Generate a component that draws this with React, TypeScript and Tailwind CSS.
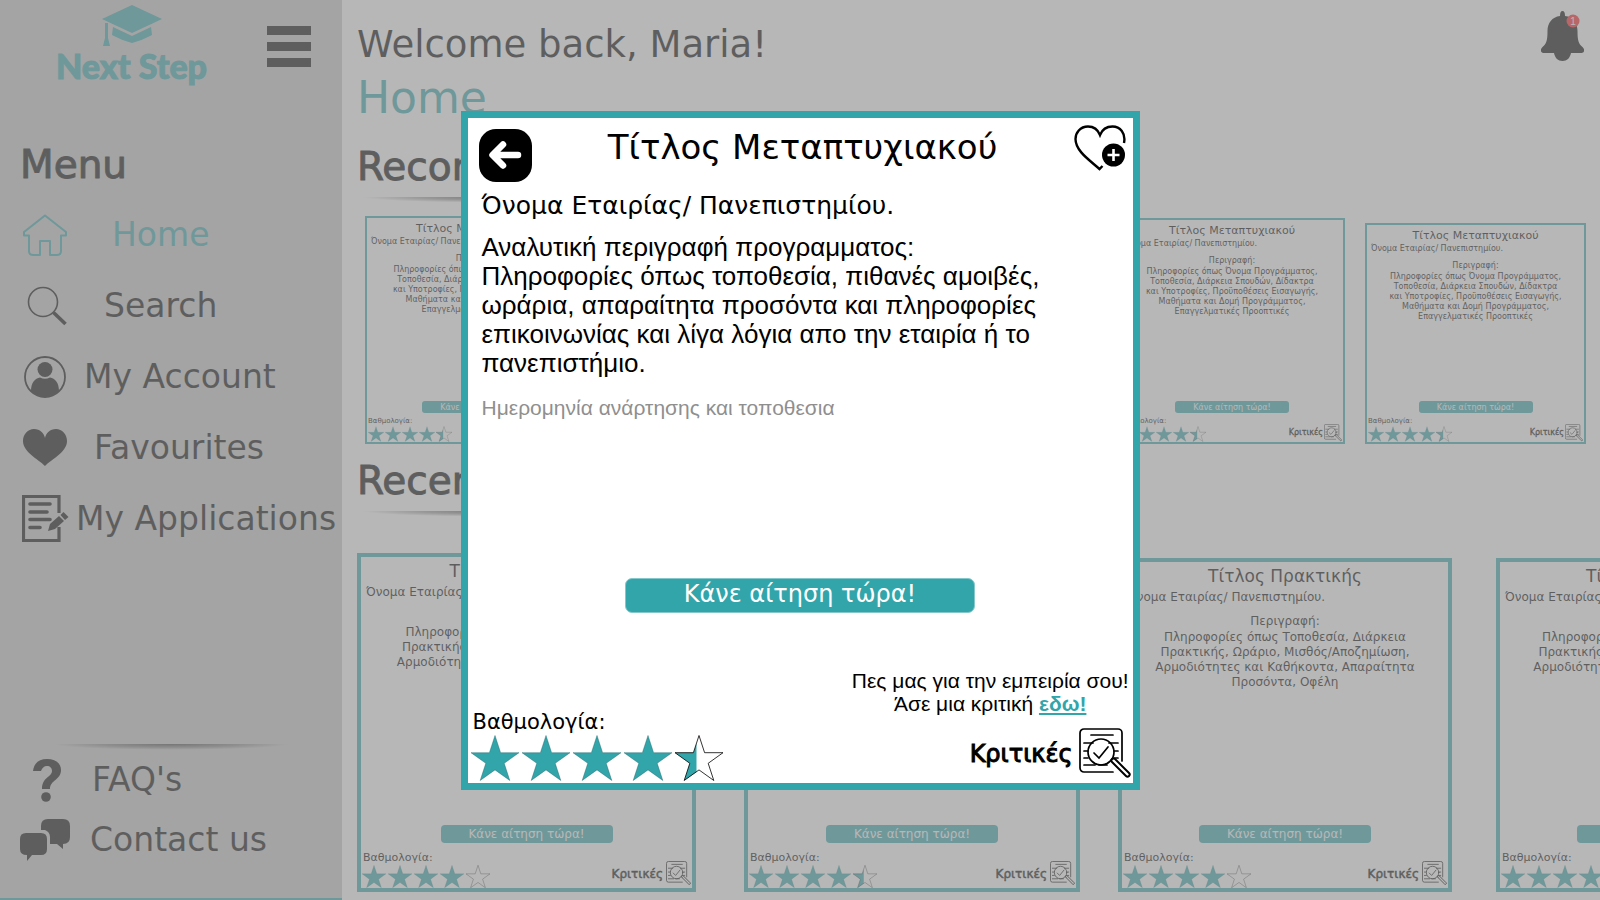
import React from "react";

type Rating = 4 | 4.5;
type Program = { title: string; description: string; rating: Rating; size: string };

const POSTGRADUATE =
  "Πληροφορίες όπως Όνομα Προγράμματος, Τοποθεσία, Διάρκεια Σπουδών, Δίδακτρα και Υποτροφίες, Προϋποθέσεις Εισαγωγής, Μαθήματα και Δομή Προγράμματος, Επαγγελματικές Προοπτικές";
const INTERNSHIP =
  "Πληροφορίες όπως Τοποθεσία, Διάρκεια Πρακτικής, Ωράριο, Μισθός/Αποζημίωση, Αρμοδιότητες και Καθήκοντα, Απαραίτητα Προσόντα, Οφέλη";

const recommended: Program[] = [
  { title: "Τίτλος Μεταπτυχιακού", description: POSTGRADUATE, rating: 4.5, size: "w-[228px]" },
  { title: "Τίτλος Μεταπτυχιακού", description: POSTGRADUATE, rating: 4.5, size: "w-[226px]" },
  { title: "Τίτλος Μεταπτυχιακού", description: POSTGRADUATE, rating: 4.5, size: "w-[226px]" },
  { title: "Τίτλος Μεταπτυχιακού", description: POSTGRADUATE, rating: 4.5, size: "w-[226px]" },
  { title: "Τίτλος Μεταπτυχιακού", description: POSTGRADUATE, rating: 4.5, size: "w-[221px]" },
];

const recent: Program[] = [
  { title: "Τίτλος Πρακτικής", description: INTERNSHIP, rating: 4, size: "w-[339px]" },
  { title: "Τίτλος Πρακτικής", description: INTERNSHIP, rating: 4.5, size: "w-[336px]" },
  { title: "Τίτλος Πρακτικής", description: INTERNSHIP, rating: 4, size: "w-[334px]" },
  { title: "Τίτλος Πρακτικής", description: INTERNSHIP, rating: 4, size: "w-[334px]" },
];

const STAR = "24,0 29.6,17.2 48,17.2 33.2,27.8 38.8,45 24,34.4 9.2,45 14.8,27.8 0,17.2 18.4,17.2";

function Star({ fill, className }: { fill: "full" | "half" | "none"; className: string }) {
  return (
    <svg viewBox="0 0 48 45" className={className} aria-hidden="true">
      {fill === "full" && <polygon points={STAR} fill="#32a5ab" stroke="#1d5f63" strokeWidth="0.4" />}
      {fill === "half" && (
        <polygon points="21.5,8 18.4,17.2 0,17.2 14.8,27.8 9.2,45 21.5,36.4" fill="#32a5ab" />
      )}
      {fill !== "full" && <polygon points={STAR} fill="none" stroke="#000" strokeWidth="0.8" />}
    </svg>
  );
}

function Stars({ rating, star, gap }: { rating: Rating; star: string; gap: string }) {
  return (
    <div className={`flex ${gap}`} role="img" aria-label={`${rating} / 5`}>
      {[0, 1, 2, 3].map((i) => (
        <Star key={i} fill="full" className={star} />
      ))}
      <Star fill={rating === 4.5 ? "half" : "none"} className={star} />
    </div>
  );
}

function ReviewIcon({ className }: { className: string }) {
  return (
    <svg viewBox="0 0 52 52" className={className} fill="none" stroke="currentColor" strokeWidth="1.7" strokeLinecap="round" aria-hidden="true">
      <path d="M34 44H5a4 4 0 0 1-4-4V5a4 4 0 0 1 4-4h34a4 4 0 0 1 4 4v28" />
      <path d="M12 7h22M5 15h9M30 15h9M5 23h4M35 23h4M5 30h4M35 30h4M5 37h11M20 37h8" />
      <circle cx="22" cy="24" r="13" />
      <path d="m15 25 5 5 9-11" />
      <path d="m33 34 14 14a1.8 1.8 0 0 0 3-3L36 31a2 2 0 0 0-3 3Z" strokeWidth="2" />
    </svg>
  );
}

function SmallCard({ program }: { program: Program }) {
  return (
    <article className={`${program.size} flex aspect-square flex-col border-2 border-[#32a5ab] bg-white`}>
      <h3 className="mt-1 text-center text-[11px] leading-[14px]">{program.title}</h3>
      <p className="ml-1 text-[8px] leading-[12px]">Όνομα Εταιρίας/ Πανεπιστημίου.</p>
      <p className="mt-[5px] text-center text-[8px] leading-[12px]">Περιγραφή:</p>
      <p className="mx-auto w-[177px] text-center text-[8px] leading-[10px]">{program.description}</p>
      <button type="button" className="mx-auto mt-auto h-3 w-[114px] rounded-[3px] bg-[#32a5ab] text-[8px] leading-[11px] text-white">
        Κάνε αίτηση τώρα!
      </button>
      <div className="mt-[3px] flex items-end justify-between px-px">
        <div>
          <p className="text-[7px] leading-[10px]">Βαθμολογία:</p>
          <Stars rating={program.rating} star="h-[16px] w-[16px]" gap="gap-px" />
        </div>
        <a href="#reviews" className="flex items-center gap-px text-[8px] leading-[12px] [-webkit-text-stroke:0.3px_#000]">
          Κριτικές
          <ReviewIcon className="size-[18px]" />
        </a>
      </div>
    </article>
  );
}

function LargeCard({ program }: { program: Program }) {
  return (
    <article className={`${program.size} flex aspect-square flex-col border-4 border-[#32a5ab] bg-white`}>
      <h3 className="mt-1 text-center text-[17px] leading-[20px]">{program.title}</h3>
      <p className="ml-[5px] mt-[3px] text-[12px] leading-[16px]">Όνομα Εταιρίας/ Πανεπιστημίου.</p>
      <p className="mt-2 text-center text-[12px] leading-[16px]">Περιγραφή:</p>
      <p className="mx-auto mt-px w-[280px] text-center text-[12px] leading-[15px]">{program.description}</p>
      <button type="button" className="mx-auto mt-auto h-[18px] w-[172px] rounded-[4px] bg-[#32a5ab] text-[12px] leading-[17px] text-white">
        Κάνε αίτηση τώρα!
      </button>
      <div className="mt-2 flex items-end justify-between px-px">
        <div>
          <p className="pl-px text-[11px] leading-[14px]">Βαθμολογία:</p>
          <Stars rating={program.rating} star="h-[23px] w-[24px]" gap="gap-[2px]" />
        </div>
        <a href="#reviews" className="mb-[2px] flex items-center gap-[3px] text-[12px] leading-[16px] [-webkit-text-stroke:0.5px_#000]">
          Κριτικές
          <ReviewIcon className="size-[25px]" />
        </a>
      </div>
    </article>
  );
}

function HomeIcon() {
  return (
    <svg viewBox="0 0 44 42" className="h-[42px] w-[44px]" fill="none" stroke="currentColor" strokeWidth="2" strokeLinejoin="round" aria-hidden="true">
      <path d="M22 1.5 43 18v3.5h-5V37q0 4-4 4h-7V27H17v14h-7q-4 0-4-4V21.500H1V18Z" />
    </svg>
  );
}
function SearchIcon() {
  return (
    <svg viewBox="0 0 40 40" className="ml-1 size-10" fill="none" stroke="currentColor" aria-hidden="true">
      <circle cx="16" cy="16" r="14.500" strokeWidth="1.600" />
      <path d="m26.500 26.500 12 11.500" strokeWidth="3.600" />
    </svg>
  );
}
function AccountIcon() {
  return (
    <svg viewBox="0 0 42 42" className="size-[42px]" fill="currentColor" aria-hidden="true">
      <circle cx="21" cy="21" r="20" fill="none" stroke="currentColor" strokeWidth="1.800" />
      <circle cx="21" cy="13.500" r="7.500" />
      <path d="M7 35c0-8 4-13 9-13.500q5 2.500 10 0c5 .5 9 5.500 9 13.500a20 20 0 0 1-28 0Z" />
    </svg>
  );
}
function HeartIcon() {
  return (
    <svg viewBox="0 0 44 37" className="h-[37px] w-[44px]" fill="currentColor" aria-hidden="true">
      <path d="M22 37C15 30 0 23 0 12 0 5 5 0 11 0c6 0 10 4 11 9 1-5 5-9 11-9s11 5 11 12c0 11-15 18-22 25Z" />
    </svg>
  );
}
function ApplicationsIcon() {
  return (
    <svg viewBox="0 0 47 47" className="h-[47px] w-[47px]" fill="none" stroke="currentColor" aria-hidden="true">
      <path d="M37 18V1.500H1.500v44H37V32" strokeWidth="3.200" />
      <path d="M8 9h20M8 17h17M8 24.500h20M8 32.500h10" strokeWidth="3.600" strokeLinecap="round" />
      <path d="m26 36 2-7 9-8 5 5-9 8Z" fill="currentColor" stroke="none" />
      <path d="m38.500 20 3-3 5 5-3.500 3Z" fill="currentColor" stroke="none" />
    </svg>
  );
}
function QuestionIcon() {
  return (
    <svg viewBox="0 0 28 43" className="ml-1 h-[43px] w-[28px]" fill="currentColor" aria-hidden="true">
      <path d="M0 12C1 4 6 0 14 0c8 0 14 4 14 11 0 10-11 10-11 19H9c0-12 10-12 10-18 0-3-2-5-5-5s-5 2-6 5Z" />
      <circle cx="13" cy="38" r="4.800" />
    </svg>
  );
}
function ChatIcon() {
  return (
    <svg viewBox="0 0 50 42" className="h-[42px] w-[50px]" fill="currentColor" aria-hidden="true">
      <path d="M21 11V7q0-7 7-7h15q7 0 7 7v11q0 7-7 7v5l-6-5h-7V18q0-5-5-7Z" />
      <path d="M6 14h15q6 0 6 6v10q0 6-6 6h-9l-5 6v-6q-7 0-7-6V20q0-6 6-6Z" />
    </svg>
  );
}

const menu = [
  { label: "Home", icon: <HomeIcon />, text: "pl-10", color: "text-[#32a5ab]" },
  { label: "Search", icon: <SearchIcon />, text: "pl-8", color: "text-black" },
  { label: "My Account", icon: <AccountIcon />, text: "pl-3", color: "text-black" },
  { label: "Favourites", icon: <HeartIcon />, text: "pl-[22px]", color: "text-black" },
  { label: "My Applications", icon: <ApplicationsIcon />, text: "pl-1", color: "text-black" },
];

function Divider({ className }: { className: string }) {
  return (
    <div className={`h-[6px] bg-[radial-gradient(ellipse_at_top,#444_0%,#5558_40%,transparent_68%)] ${className}`} />
  );
}

function Sidebar() {
  return (
    <aside className="flex w-[342px] shrink-0 flex-col border-b-2 border-[#32a5ab] bg-[#c8c8c8]">
      <div className="flex items-start justify-between pl-[56px] pr-[31px] pt-[5px]">
        <a href="#home" className="flex flex-col items-center text-[#32a5ab]">
          <svg viewBox="0 0 60 42" className="h-[42px] w-[60px]" fill="currentColor" aria-hidden="true">
            <path d="M30 0 60 14 30 28 0 14Z" />
            <path d="M11 22 30 31l19-9 1 8q-9 5-20 8-11-3-20-8Z" />
            <path d="M3 18h3v15l2 8H1l2-8Z" />
          </svg>
          <span className="whitespace-nowrap font-['Lato',sans-serif] text-[34px] font-black leading-[38px] [-webkit-text-stroke:1px_#32a5ab]">Next Step</span>
        </a>
        <button type="button" aria-label="Toggle menu" className="mt-[21px] flex w-11 flex-col gap-[7px]">
          <span className="h-[9px] w-full bg-black" />
          <span className="h-[9px] w-full bg-black" />
          <span className="h-[9px] w-full bg-black" />
        </button>
      </div>
      <h2 className="mt-14 pl-5 text-[39px] leading-[48px] [-webkit-text-stroke:1px_#000]">Menu</h2>
      <nav className="mt-[10px] flex flex-col text-[33px]">
        {menu.map((m) => (
          <a key={m.label} href="#menu" className={`flex h-[71px] items-center whitespace-nowrap pl-[18px] ${m.color}`}>
            <span className="flex w-[54px] shrink-0 justify-center">{m.icon}</span>
            <span className={m.text}>{m.label}</span>
          </a>
        ))}
      </nav>
      <Divider className="mx-[50px] mt-auto" />
      <nav className="mb-7 flex flex-col text-[33px]">
        <a href="#faq" className="flex h-[60px] items-center pl-[18px]">
          <span className="flex w-[54px] justify-center"><QuestionIcon /></span>
          <span className="pl-5">FAQ's</span>
        </a>
        <a href="#contact" className="flex h-[60px] items-center pl-[18px]">
          <span className="flex w-[54px] justify-center"><ChatIcon /></span>
          <span className="pl-[18px]">Contact us</span>
        </a>
      </nav>
    </aside>
  );
}

function ProgramDialog() {
  return (
    <section role="dialog" aria-modal="true" aria-labelledby="dialog-title" className="flex aspect-square w-[679px] flex-col border-[7px] border-[#32a5ab] bg-white">
      <header className="flex items-start justify-between pl-[11px] pr-[7px] pt-[7px]">
        <button type="button" aria-label="Back" className="mt-1 flex size-[53px] items-center justify-center rounded-[17px] bg-black text-white">
          <svg viewBox="0 0 34 28" className="h-[28px] w-[34px]" fill="none" stroke="currentColor" strokeWidth="6.500" strokeLinecap="round" strokeLinejoin="round" aria-hidden="true">
            <path d="M30 14H5M15 3.500 4.500 14 15 24.500" />
          </svg>
        </button>
        <h1 id="dialog-title" className="mt-1 text-[34px] leading-[36px]">Τίτλος Μεταπτυχιακού</h1>
        <button type="button" aria-label="Add to favourites">
          <svg viewBox="0 0 52 46" className="h-[46px] w-[52px]" aria-hidden="true">
            <path d="M50 18C52 8 46 1.500 38.500 1.500 32 1.500 28 5 26 10 24 5 20 1.500 14 1.500 6 1.500 1.500 8 1.500 14c0 12 14 21 24 30l3-3" fill="none" stroke="#000" strokeWidth="2.400" />
            <circle cx="39.500" cy="30" r="11.500" />
            <path d="M39.500 24v12M33.500 30h12" stroke="#fff" strokeWidth="2.600" />
          </svg>
        </button>
      </header>
      <div className="mt-[10px] px-[14px]">
        <p className="text-[25px] leading-[28px]">Όνομα Εταιρίας/ Πανεπιστημίου.</p>
        <p className="mt-[13px] max-w-[590px] font-['Liberation_Sans',Arial,sans-serif] text-[26px] leading-[29px]">
          Αναλυτική περιγραφή προγραμματος:
          <br />
          Πληροφορίες όπως τοποθεσία, πιθανές αμοιβές, ωράρια, απαραίτητα προσόντα και πληροφορίες επικοινωνίας και λίγα λόγια απο την εταιρία ή το πανεπιστήμιο.
        </p>
        <p className="mt-[18px] font-['Liberation_Sans',Arial,sans-serif] text-[21px] leading-[24px] text-[#8f8f8f]">Ημερομηνία ανάρτησης και τοποθεσια</p>
      </div>
      <button type="button" className="mx-auto mt-[158px] h-[35px] w-[350px] rounded-[7px] border border-[#84c8cc] bg-[#32a5ab] pb-[3px] text-[24px] leading-[30px] text-white">
        Κάνε αίτηση τώρα!
      </button>
      <footer className="mt-auto flex items-end justify-between pb-[2px] pl-[3px] pr-[2px]">
        <div>
          <p className="pl-[2px] text-[21px] leading-[26px]">Βαθμολογία:</p>
          <Stars rating={4.5} star="h-[46px] w-[48px]" gap="gap-[3px]" />
        </div>
        <div className="flex flex-col items-end">
          <p className="pr-[2px] text-center font-['Liberation_Sans',Arial,sans-serif] text-[21px] leading-[23px]">
            Πες μας για την εμπειρία σου!
            <br />
            Άσε μια κριτική{" "}
            <a href="#review" className="font-bold text-[#32a5ab] underline">εδω!</a>
          </p>
          <a href="#reviews" className="mb-px mt-[13px] flex items-center gap-[6px] text-[24px] leading-[28px] [-webkit-text-stroke:1px_#000]">
            Κριτικές
            <ReviewIcon className="size-[52px]" />
          </a>
        </div>
      </footer>
    </section>
  );
}

export default function App() {
  return (
    <div className="flex min-h-screen overflow-hidden bg-white font-['DejaVu_Sans',Verdana,sans-serif] text-black">
      <Sidebar />
      <main className="min-w-0 flex-1 overflow-hidden pl-[15px]">
        <div className="flex items-start justify-between pr-4">
          <div className="pt-[23px]">
            <p className="text-[37px] leading-[44px]">Welcome back, Maria!</p>
            <h1 className="mt-[5px] text-[44px] leading-[52px] text-[#32a5ab]">Home</h1>
          </div>
          <button type="button" aria-label="Notifications" className="mt-[11px]">
            <svg viewBox="0 0 43 50" className="h-[50px] w-[43px]" aria-hidden="true">
              <path d="M21.500 0q2.500 0 2.500 5c8 1 12.500 7 12.500 15 0 9 1 13 5 16 3 3 1.500 6-1 6H30c-1 5-4 8-8.500 8S14 47 13 42H3c-3 0-4.500-3-1.500-6 4-3 5-7 5-16C6.500 12 11 6 19 5q0-5 2.500-5Z" />
              <circle cx="32" cy="10" r="6.500" fill="#ff1a1a" />
              <text x="32" y="13.500" fontSize="10" fill="#fff" textAnchor="middle" fontFamily="Liberation Sans, sans-serif">1</text>
            </svg>
          </button>
        </div>
        <h2 className="mt-[19px] text-[39px] leading-[48px] [-webkit-text-stroke:1px_#000]">Recommended</h2>
        <Divider className="mt-[6px] w-[300px]" />
        <div className="ml-2 mt-[13px] grid grid-cols-[251px_252px_251px_246px_221px] items-end">
          {recommended.map((p, i) => (
            <SmallCard key={i} program={p} />
          ))}
        </div>
        <h2 className="mt-[13px] text-[39px] leading-[48px] [-webkit-text-stroke:1px_#000]">Recent</h2>
        <Divider className="mt-[6px] w-[300px]" />
        <div className="mt-9 grid grid-cols-[387px_374px_378px_335px] items-end">
          {recent.map((p, i) => (
            <LargeCard key={i} program={p} />
          ))}
        </div>
      </main>
      <div className="fixed inset-0 flex items-center justify-center bg-[#919191]/65">
        <ProgramDialog />
      </div>
    </div>
  );
}
